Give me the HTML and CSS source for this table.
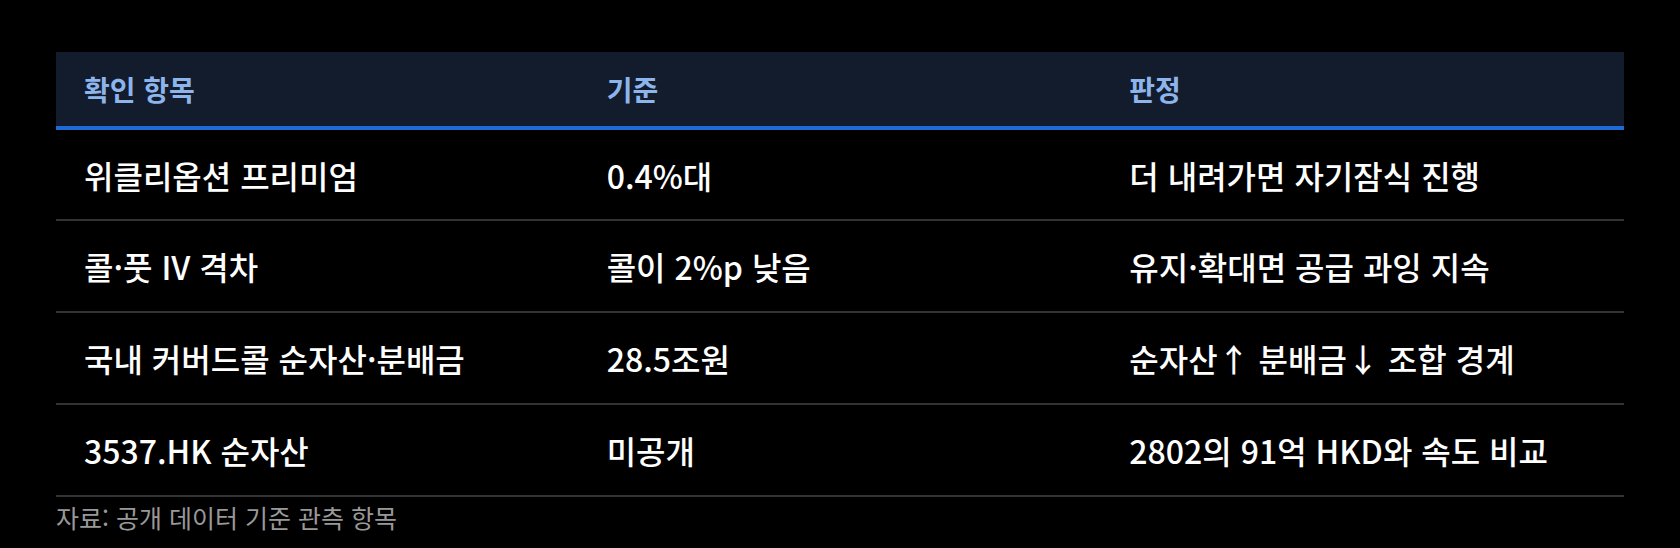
FILE: index.html
```html
<!DOCTYPE html>
<html lang="ko">
<head>
<meta charset="utf-8">
<link rel="stylesheet" href="styles.css">
</head>
<body>
<div class="wrap">
  <table class="check">
    <thead>
      <tr><th>확인 항목</th><th>기준</th><th>판정</th></tr>
    </thead>
    <tbody>
      <tr><td>위클리옵션 프리미엄</td><td>0.4%대</td><td>더 내려가면 자기잠식 진행</td></tr>
      <tr><td>콜·풋 IV 격차</td><td>콜이 2%p 낮음</td><td>유지·확대면 공급 과잉 지속</td></tr>
      <tr><td>국내 커버드콜 순자산·분배금</td><td>28.5조원</td><td>순자산↑ 분배금↓ 조합 경계</td></tr>
      <tr><td>3537.HK 순자산</td><td>미공개</td><td>2802의 91억 HKD와 속도 비교</td></tr>
    </tbody>
  </table>
  <p class="source">자료: 공개 데이터 기준 관측 항목</p>
</div>
</body>
</html>
```
FILE: styles.css
```css
html, body {
  margin: 0;
  padding: 0;
  background: #000;
}
body {
  font-family: "Noto Sans CJK KR", "Noto Sans", sans-serif;
  color: #fff;
}
.wrap {
  padding: 52px 56px 0;
}
.check {
  width: 100%;
  border-collapse: collapse;
  table-layout: fixed;
}
.check th {
  background: #131c2c;
  color: #8db5ec;
  font-size: 28px;
  font-weight: 700;
  text-align: left;
  height: 76px;
  padding: 0 28px;
  border-bottom: 4px solid #1f6bd6;
  box-sizing: border-box;
}
.check td {
  font-size: 32px;
  font-weight: 500;
  height: 92px;
  padding: 0 28px;
  border-bottom: 2px solid #333;
  box-sizing: border-box;
}
.source {
  margin: 3px 0 0;
  font-size: 25px;
  color: #999;
  line-height: 34px;
}
```
